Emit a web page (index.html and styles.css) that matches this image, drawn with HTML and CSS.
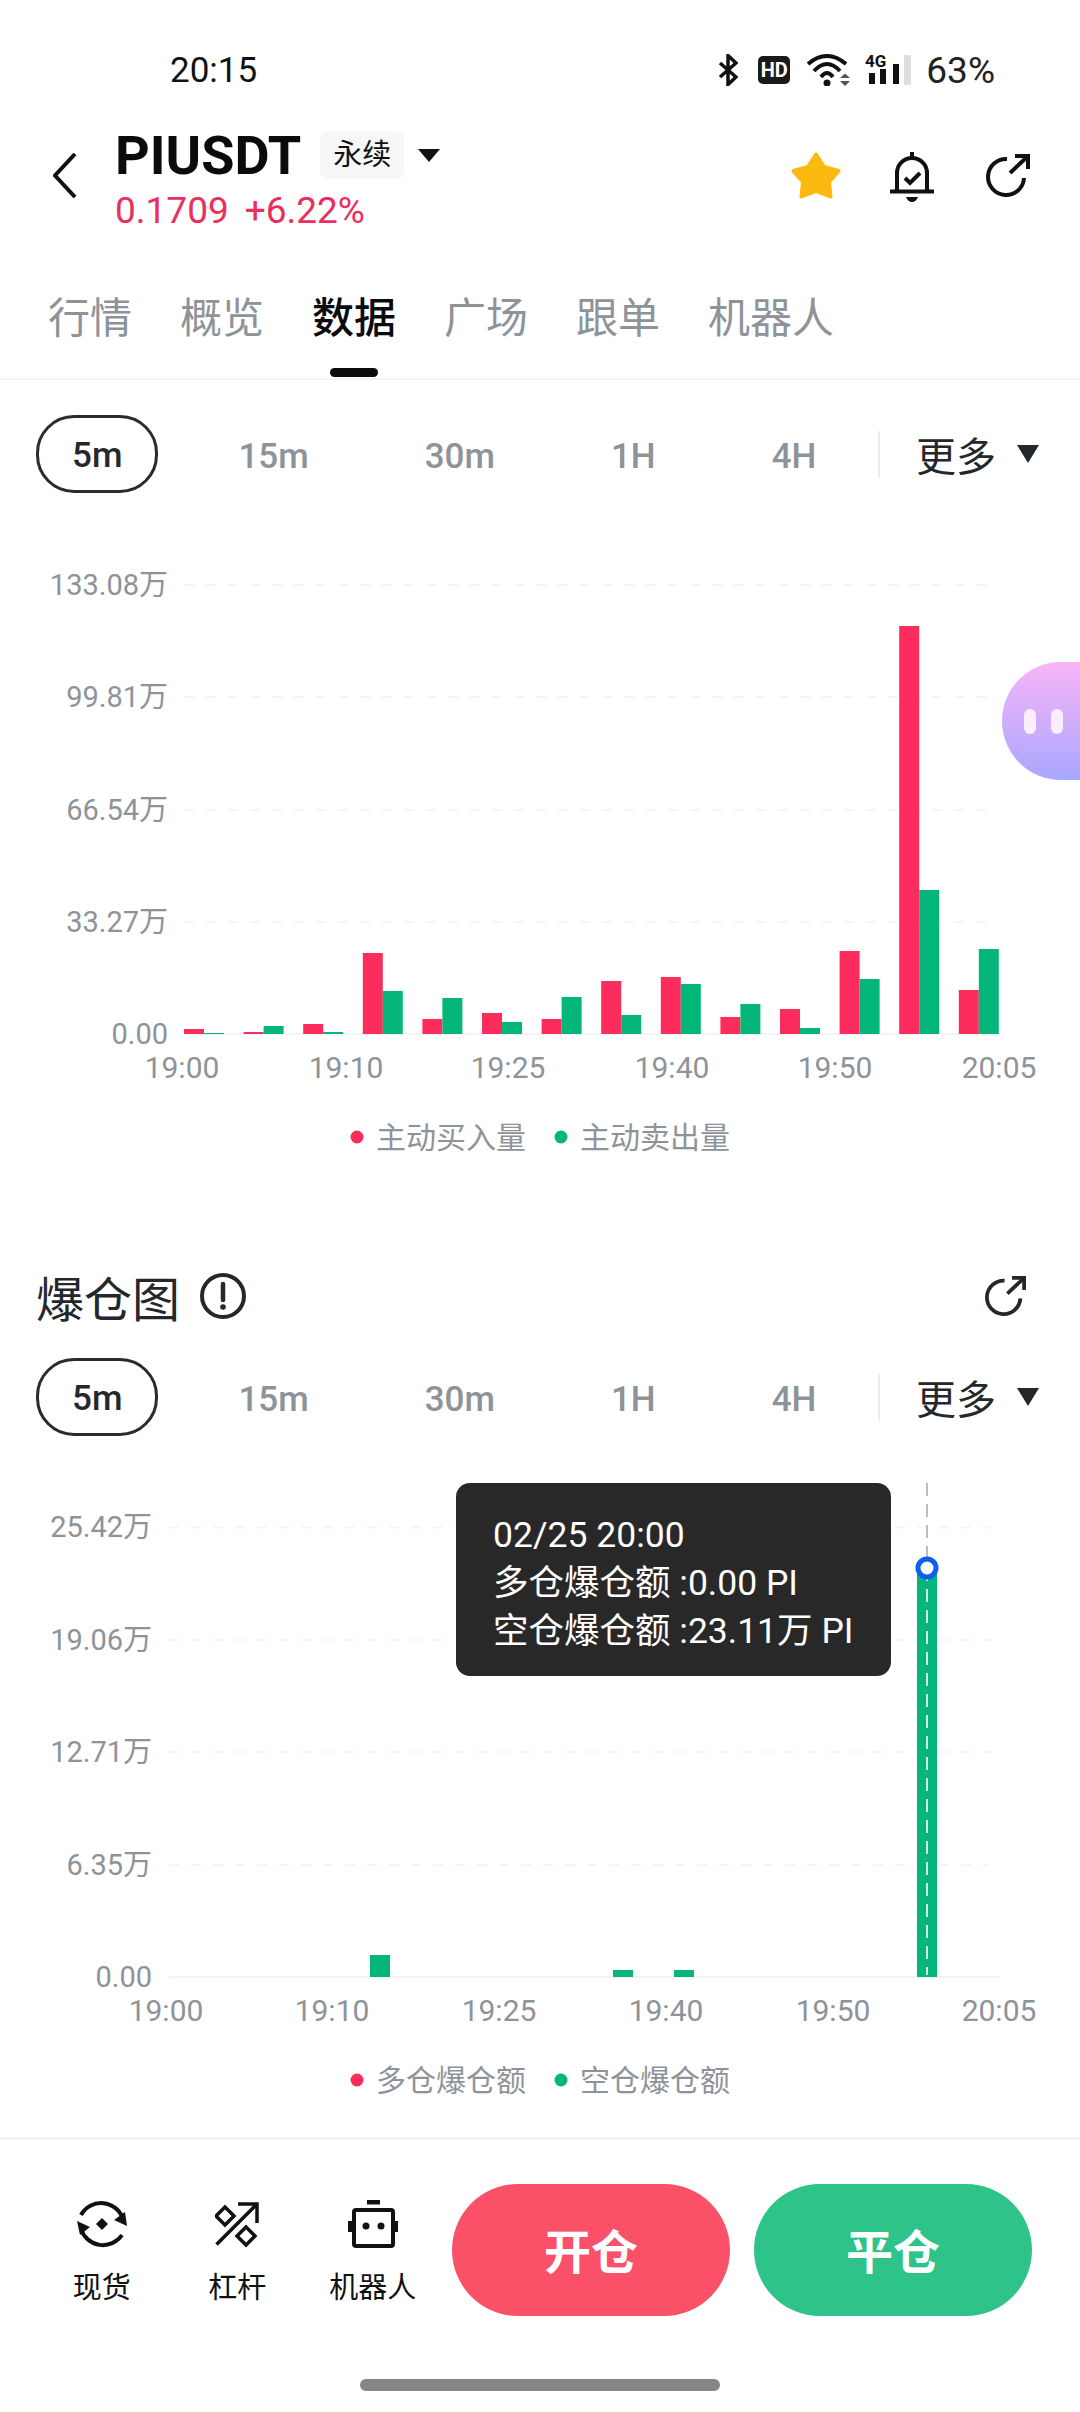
FILE: index.html
```html
<!DOCTYPE html>
<html lang="zh">
<head>
  <meta charset="UTF-8" />
  <meta name="viewport" content="width=device-width, initial-scale=1.0"/>
  <title>PIUSDT 数据</title>
  <link rel="stylesheet" href="styles.css">
</head>
<body>
  <div class="status">
    <span class="time">20:15</span>
    <div class="status-icons">
      <svg width="20" height="32" viewBox="0 0 20 32" class="line-icon thin"><path d="M2 9 L18 23 L10 30.5 V1.5 L18 9 L2 23"/></svg>
      <span class="hd">HD</span>
      <svg width="44" height="32" viewBox="0 0 44 32">
        <g class="line-icon"><path d="M2 10 Q21 -6 40 10"/><path d="M8 17 Q21 3 34 17"/><path d="M15 23 Q21 15 27 23"/></g>
        <circle cx="21" cy="29" r="3.5" fill="#111"/>
        <path d="M39 19.5 L44 24 H34 Z M34 27 H44 L39 32 Z" fill="#555"/>
      </svg>
      <svg class="signal" width="46" height="36" viewBox="0 -4 46 36">
        <text x="0" y="13" class="net">4G</text>
        <rect x="4" y="19" width="6" height="11" fill="#111"/>
        <rect x="15" y="15" width="6" height="15" fill="#111"/>
        <rect x="28" y="10" width="6" height="20" fill="#111"/>
        <rect x="39" y="1" width="7" height="30" fill="#ddd"/>
      </svg>
      <span class="battery">63%</span>
    </div>
  </div>

  <div class="header">
    <svg class="back line-icon" width="24" height="45" viewBox="0 0 24 45"><path d="M22 1 L2 22.5 L22 44"/></svg>
    <div class="title-block">
      <div class="title-row">
        <span class="symbol">PIUSDT</span>
        <span class="badge">永续</span>
        <span class="caret caret-sm"></span>
      </div>
      <div class="price"><span>0.1709</span><span>+6.22%</span></div>
    </div>
    <div class="header-actions">
      <svg width="50" height="47" viewBox="0 0 50 47"><path d="M25 2.5 L33 15 L47.5 19 L38 30 L39.5 44.5 L25 39 L10.5 44.5 L12 30 L2.5 19 L17 15 Z" fill="#fcb90f" stroke="#fcb90f" stroke-width="4" stroke-linejoin="round"/></svg>
      <svg width="44" height="50" viewBox="0 0 44 50">
        <g class="line-icon"><path d="M7 38 V21 A15 15 0 0 1 37 21 V38"/><path d="M22 0 V5"/><path d="M0 39.5 H44"/><path d="M15 26 L20 31 L30 21"/></g>
        <path d="M16 45 H28 Q26 50 22 50 Q18 50 16 45 Z" fill="#111"/>
      </svg>
      <svg width="44" height="43" viewBox="0 0 44 43" class="line-icon share"><path d="M21 5 A18 18 0 1 0 38 24"/><path d="M24 19 L41 3"/><path d="M29 2 H42 V15"/></svg>
    </div>
  </div>

  <div class="tabs">
    <span class="tab">行情</span>
    <span class="tab">概览</span>
    <span class="tab active">数据</span>
    <span class="tab">广场</span>
    <span class="tab">跟单</span>
    <span class="tab">机器人</span>
  </div>

  <div class="periods">
    <div class="period-list">
      <span class="period current">5m</span>
      <span class="period">15m</span>
      <span class="period">30m</span>
      <span class="period">1H</span>
      <span class="period">4H</span>
    </div>
    <div class="more"><span>更多</span><span class="caret"></span></div>
  </div>

  <div class="chart chart-flow">
    <svg width="1080" height="620" viewBox="0 0 1080 620">
      <g class="grid">
        <line x1="184" x2="990" y1="25" y2="25"/>
        <line x1="184" x2="990" y1="137" y2="137"/>
        <line x1="184" x2="990" y1="250" y2="250"/>
        <line x1="184" x2="990" y1="362" y2="362"/>
      </g>
      <line class="zero" x1="184" x2="1000" y1="474" y2="474"/>
      <g class="axis y-axis">
        <text x="168" y="35">133.08万</text>
        <text x="168" y="147">99.81万</text>
        <text x="168" y="260">66.54万</text>
        <text x="168" y="372">33.27万</text>
        <text x="168" y="484">0.00</text>
      </g>
      <g class="axis x-axis">
        <text x="182" y="518">19:00</text>
        <text x="346" y="518">19:10</text>
        <text x="508" y="518">19:25</text>
        <text x="672" y="518">19:40</text>
        <text x="835" y="518">19:50</text>
        <text x="999" y="518">20:05</text>
      </g>
      <g class="buy">
        <rect x="184" y="469" width="20" height="5"/>
        <rect x="243.6" y="472" width="20" height="2"/>
        <rect x="303.2" y="464" width="20" height="10"/>
        <rect x="362.8" y="393" width="20" height="81"/>
        <rect x="422.4" y="459" width="20" height="15"/>
        <rect x="482" y="453" width="20" height="21"/>
        <rect x="541.6" y="459" width="20" height="15"/>
        <rect x="601.2" y="421" width="20" height="53"/>
        <rect x="660.8" y="417" width="20" height="57"/>
        <rect x="720.4" y="457" width="20" height="17"/>
        <rect x="780" y="449" width="20" height="25"/>
        <rect x="839.6" y="391" width="20" height="83"/>
        <rect x="899.2" y="66" width="20" height="408"/>
        <rect x="958.8" y="430" width="20" height="44"/>
      </g>
      <g class="sell">
        <rect x="204" y="473" width="20" height="1"/>
        <rect x="263.6" y="466" width="20" height="8"/>
        <rect x="323.2" y="472" width="20" height="2"/>
        <rect x="382.8" y="431" width="20" height="43"/>
        <rect x="442.4" y="438" width="20" height="36"/>
        <rect x="502" y="462" width="20" height="12"/>
        <rect x="561.6" y="437" width="20" height="37"/>
        <rect x="621.2" y="455" width="20" height="19"/>
        <rect x="680.8" y="424" width="20" height="50"/>
        <rect x="740.4" y="444" width="20" height="30"/>
        <rect x="800" y="468" width="20" height="6"/>
        <rect x="859.6" y="419" width="20" height="55"/>
        <rect x="919.2" y="330" width="20" height="144"/>
        <rect x="978.8" y="389" width="20" height="85"/>
      </g>
      <circle class="buy" cx="357" cy="577" r="6.5"/>
      <text class="legend" x="376" y="588">主动买入量</text>
      <circle class="sell" cx="561" cy="577" r="6.5"/>
      <text class="legend" x="580" y="588">主动卖出量</text>
    </svg>
    <div class="bubble"><span></span><span></span></div>
  </div>

  <div class="section-title">
    <span class="section-name">爆仓图</span>
    <svg width="46" height="46" viewBox="0 0 46 46" class="info">
      <circle cx="23" cy="23" r="21" fill="none" stroke="#24272c" stroke-width="4"/>
      <path d="M23 11 V27" stroke="#24272c" stroke-width="4.5" stroke-linecap="round"/>
      <circle cx="23" cy="34" r="2.8" fill="#24272c"/>
    </svg>
    <svg width="41" height="40" viewBox="0 0 44 43" class="line-icon section-share"><path d="M21 5 A18 18 0 1 0 38 24"/><path d="M24 19 L41 3"/><path d="M29 2 H42 V15"/></svg>
  </div>

  <div class="periods periods-second">
    <div class="period-list">
      <span class="period current">5m</span>
      <span class="period">15m</span>
      <span class="period">30m</span>
      <span class="period">1H</span>
      <span class="period">4H</span>
    </div>
    <div class="more"><span>更多</span><span class="caret"></span></div>
  </div>

  <div class="chart chart-liq">
    <svg width="1080" height="660" viewBox="0 0 1080 660">
      <g class="grid">
        <line x1="169" x2="990" y1="57.5" y2="57.5"/>
        <line x1="169" x2="990" y1="170" y2="170"/>
        <line x1="169" x2="990" y1="282" y2="282"/>
        <line x1="169" x2="990" y1="395" y2="395"/>
      </g>
      <line class="zero" x1="169" x2="1000" y1="507" y2="507"/>
      <g class="axis y-axis">
        <text x="152" y="67">25.42万</text>
        <text x="152" y="180">19.06万</text>
        <text x="152" y="292">12.71万</text>
        <text x="152" y="405">6.35万</text>
        <text x="152" y="517">0.00</text>
      </g>
      <g class="axis x-axis">
        <text x="166" y="551">19:00</text>
        <text x="332" y="551">19:10</text>
        <text x="499" y="551">19:25</text>
        <text x="666" y="551">19:40</text>
        <text x="833" y="551">19:50</text>
        <text x="999" y="551">20:05</text>
      </g>
      <g class="sell">
        <rect x="370" y="485" width="20" height="22"/>
        <rect x="613" y="500" width="20" height="7"/>
        <rect x="674" y="500" width="20" height="7"/>
        <rect x="917" y="98" width="20" height="409"/>
      </g>
      <line class="cursor-top" x1="927" x2="927" y1="13" y2="98"/>
      <line class="cursor-bar" x1="927" x2="927" y1="98" y2="505"/>
      <circle class="marker" cx="927" cy="98" r="9"/>
      <circle class="buy" cx="357" cy="610" r="6.5"/>
      <text class="legend" x="376" y="621">多仓爆仓额</text>
      <circle class="sell" cx="561" cy="610" r="6.5"/>
      <text class="legend" x="580" y="621">空仓爆仓额</text>
    </svg>
    <div class="tooltip">
      <div>02/25 20:00</div>
      <div>多仓爆仓额 :0.00 PI</div>
      <div>空仓爆仓额 :23.11万 PI</div>
    </div>
  </div>

  <div class="bottom">
    <div class="tools">
      <div class="tool">
        <svg width="50" height="50" viewBox="0 0 50 50">
          <g class="line-icon"><path d="M4 16 A23 23 0 0 1 46 20"/><path d="M4 30 A23 23 0 0 0 45 36"/></g>
          <path d="M50 27 L37 21 L48 13 Z M0 22 L13 28 L3 36 Z" fill="#111"/>
          <path d="M25 19 L31 25 L25 31 L19 25 Z" fill="#111"/>
        </svg>
        <span>现货</span>
      </div>
      <div class="tool">
        <svg width="44" height="44" viewBox="0 0 44 44" class="line-icon thin">
          <path d="M1.5 42.5 L42 2"/><path d="M23 2 H42 V21"/>
          <path d="M10 5 L19 14 L10 23 L1 14 Z"/><path d="M31 25 L40 34 L31 43 L22 34 Z"/>
        </svg>
        <span>杠杆</span>
      </div>
      <div class="tool">
        <svg width="50" height="48" viewBox="0 0 50 48">
          <rect x="19" y="0" width="13" height="4.5" fill="#111"/>
          <rect x="6" y="10" width="39" height="36" rx="2" fill="none" stroke="#111" stroke-width="4"/>
          <rect x="0" y="21" width="4" height="11" fill="#111"/>
          <rect x="46" y="21" width="4" height="11" fill="#111"/>
          <circle cx="18" cy="26" r="3.5" fill="#111"/>
          <circle cx="33" cy="26" r="3.5" fill="#111"/>
        </svg>
        <span>机器人</span>
      </div>
    </div>
    <div class="actions">
      <span class="action open">开仓</span>
      <span class="action close">平仓</span>
    </div>
  </div>
  <div class="homebar"></div>
</body>
</html>
```

FILE: styles.css
```css
html, body {
  margin: 0;
  background-color: #fff;
}
body {
  width: 1080px;
  height: 2412px;
  overflow: hidden;
  font-family: Roboto, "Noto Sans CJK SC", sans-serif;
  color: #111;
}
svg {
  display: block;
  flex: none;
}
.line-icon {
  fill: none;
  stroke: #111;
  stroke-width: 4;
}
.line-icon.thin {
  stroke-width: 3.5;
}

/* status bar */
.status {
  height: 122px;
  padding: 9px 85px 0 170px;
  display: flex;
  align-items: center;
  justify-content: space-between;
}
.time {
  font-size: 35px;
}
.status-icons {
  display: flex;
  align-items: center;
  gap: 15px;
}
.hd {
  width: 32px;
  height: 28px;
  margin: 0 1px 0 5px;
  background-color: #1a1a1a;
  border-radius: 5px;
  color: #fff;
  font-size: 20px;
  font-weight: 700;
  line-height: 28px;
  text-align: center;
}
.signal {
  margin-top: -4px;
}
.net {
  font-size: 17px;
  font-weight: 700;
  fill: #111;
}
.battery {
  font-size: 37px;
  color: #222;
}

/* header */
.header {
  height: 95px;
  padding-left: 53px;
  display: flex;
  align-items: flex-start;
}
.back {
  margin-top: 22px;
}
.title-block {
  margin-left: 38px;
}
.title-row {
  height: 48px;
  display: flex;
  align-items: center;
}
.symbol {
  font-size: 54px;
  font-weight: 700;
  color: #0b0b0b;
}
.badge {
  margin-left: 19px;
  width: 84px;
  line-height: 48px;
  background-color: #f7f7f7;
  border-radius: 8px;
  font-size: 29px;
  text-align: center;
}
.caret {
  width: 0;
  height: 0;
  border-left: 11px solid transparent;
  border-right: 11px solid transparent;
  border-top: 18px solid #24272c;
}
.caret-sm {
  margin-left: 14px;
  border-top: 13px solid #111;
}
.price {
  margin-top: 10px;
  display: flex;
  gap: 16px;
  font-size: 37px;
  line-height: 44px;
  color: #ea2f5c;
}
.header-actions {
  margin: 21px 50px 0 auto;
  display: flex;
  align-items: flex-start;
  gap: 49px;
}
.share {
  margin: 2px 0 0 3px;
}

/* tabs */
.tabs {
  height: 154px;
  box-sizing: border-box;
  padding: 72px 0 0 48px;
  display: flex;
  gap: 48px;
  border-bottom: 2px solid #f3f4f5;
}
.tab {
  position: relative;
  height: 42px;
  font-size: 42px;
  line-height: 42px;
  color: #8e9399;
}
.tab.active {
  color: #0b0b0b;
  font-weight: 500;
}
.tab.active::after {
  content: "";
  position: absolute;
  left: 18px;
  top: 70px;
  width: 48px;
  height: 9px;
  background-color: #0b0b0b;
  border-radius: 5px;
}

/* period switch */
.periods {
  margin-top: 35px;
  height: 78px;
  padding-left: 36px;
  display: flex;
  align-items: center;
}
.periods-second {
  margin-top: 39px;
}
.period-list {
  display: flex;
  align-items: center;
  gap: 116px;
}
.period {
  padding-top: 5px;
  font-size: 35px;
  font-weight: 500;
  color: #8e9399;
}
.period.current {
  height: 78px;
  box-sizing: border-box;
  margin-right: -36px;
  padding: 0 33px;
  border: 3px solid #2b2b2b;
  border-radius: 38px;
  line-height: 76px;
  color: #24272c;
}
.more {
  margin-left: auto;
  margin-right: 41px;
  height: 47px;
  padding-left: 36px;
  display: flex;
  align-items: center;
  gap: 21px;
  border-left: 2px solid #eee;
  font-size: 40px;
  white-space: nowrap;
  color: #24272c;
}

/* charts */
.chart {
  position: relative;
}
.chart-flow {
  margin-top: 67px;
  height: 620px;
}
.chart-liq {
  margin-top: 34px;
  height: 660px;
}
.grid line {
  stroke: #f4f5f6;
  stroke-width: 2;
  stroke-dasharray: 10 12;
}
.zero {
  stroke: #f3f4f5;
  stroke-width: 2;
}
.axis text {
  font-size: 29px;
  fill: #8e9399;
}
.x-axis text {
  font-size: 30px;
  text-anchor: middle;
}
.y-axis text {
  text-anchor: end;
}
.legend {
  font-size: 30px;
  fill: #8e9399;
}
.buy {
  fill: #fc2d5c;
}
.sell {
  fill: #05b67b;
}
.cursor-top {
  stroke: #bdbdbd;
  stroke-width: 2;
  stroke-dasharray: 13 8;
}
.cursor-bar {
  stroke: #cdeee0;
  stroke-width: 2;
  stroke-dasharray: 13 8;
}
.marker {
  fill: #fff;
  stroke: #0d5ff0;
  stroke-width: 5;
}
.tooltip {
  position: absolute;
  left: 456px;
  top: 13px;
  width: 435px;
  height: 193px;
  box-sizing: border-box;
  padding: 6px 0 0 37px;
  display: flex;
  flex-direction: column;
  justify-content: center;
  background-color: #282828;
  border-radius: 14px;
  font-size: 35.5px;
  line-height: 48px;
  color: #fff;
}
.bubble {
  position: absolute;
  right: 0;
  top: 102px;
  width: 78px;
  height: 118px;
  box-sizing: border-box;
  padding-left: 22px;
  display: flex;
  align-items: center;
  gap: 15px;
  border-radius: 59px 0 0 59px;
  background: linear-gradient(#f8b4f8, #a8a8ff);
}
.bubble span {
  width: 12px;
  height: 25px;
  border-radius: 6px;
  background-color: #fbeeff;
}

/* second section title */
.section-title {
  margin-top: 92px;
  height: 47px;
  padding: 0 54px 0 36px;
  display: flex;
  align-items: center;
}
.section-name {
  font-size: 48px;
  color: #24272c;
}
.info {
  margin-left: 20px;
}
.section-share {
  margin-left: auto;
  stroke: #24272c;
}

/* bottom bar */
.bottom {
  margin-top: 7px;
  height: 242px;
  box-sizing: border-box;
  padding: 44px 48px 0 34px;
  display: flex;
  border-top: 3px solid #f3f4f5;
}
.tools {
  display: flex;
}
.tool {
  width: 135.5px;
  padding-top: 14px;
  display: flex;
  flex-direction: column;
  align-items: center;
}
.tool svg {
  height: 52px;
}
.tool span {
  margin-top: 20px;
  font-size: 29px;
  line-height: 36px;
}
.actions {
  margin-left: auto;
  display: flex;
  gap: 24px;
}
.action {
  width: 278px;
  height: 132px;
  border-radius: 66px;
  color: #fff;
  font-size: 47px;
  font-weight: 700;
  line-height: 137px;
  text-align: center;
}
.action.open {
  background-color: #fa5068;
}
.action.close {
  background-color: #2ec388;
}
.homebar {
  width: 360px;
  height: 12px;
  margin: 0 auto;
  background-color: #858585;
  border-radius: 6px;
}
```
